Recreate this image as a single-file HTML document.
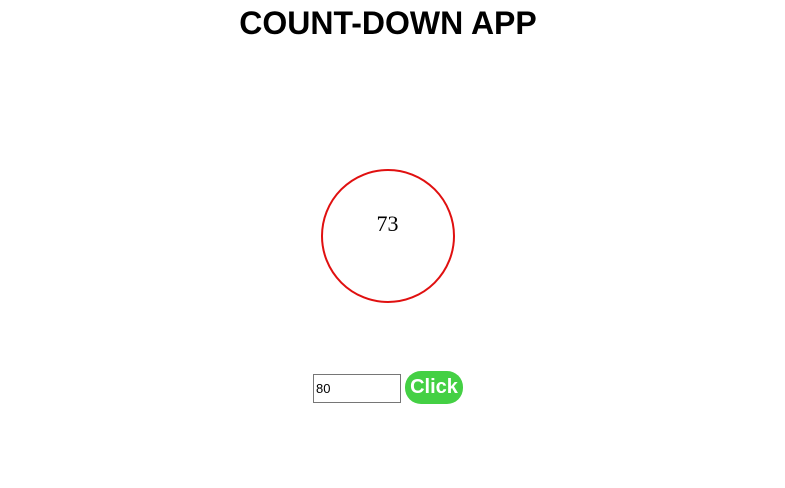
<!DOCTYPE html>
<html><head><style>
body{margin:0;width:785px;height:488px;background:#fff;position:relative;font-family:"Liberation Sans",sans-serif;}
h1{position:absolute;top:5px;left:0;width:776px;text-align:center;margin:0;font-size:32px;font-weight:bold;}
.c{position:absolute;left:321px;top:169px;width:130px;height:130px;border:2px solid #e01010;border-radius:50%;}
.n{position:absolute;left:0;top:211px;width:775px;text-align:center;font-family:"Liberation Serif",serif;font-size:22px;}
.in{position:absolute;left:313px;top:374px;width:84px;height:27px;border:1px solid #767676;font-size:13px;line-height:27px;padding-left:2px;}
.b{position:absolute;left:405px;top:371px;width:58px;height:33px;background:#44d044;border-radius:16px;color:#fff;font-weight:bold;font-size:20px;text-align:center;line-height:32px;}
</style></head><body>
<h1>COUNT-DOWN APP</h1>
<div class="c"></div>
<div class="n">73</div>
<div class="in">80</div>
<div class="b">Click</div>
</body></html>
